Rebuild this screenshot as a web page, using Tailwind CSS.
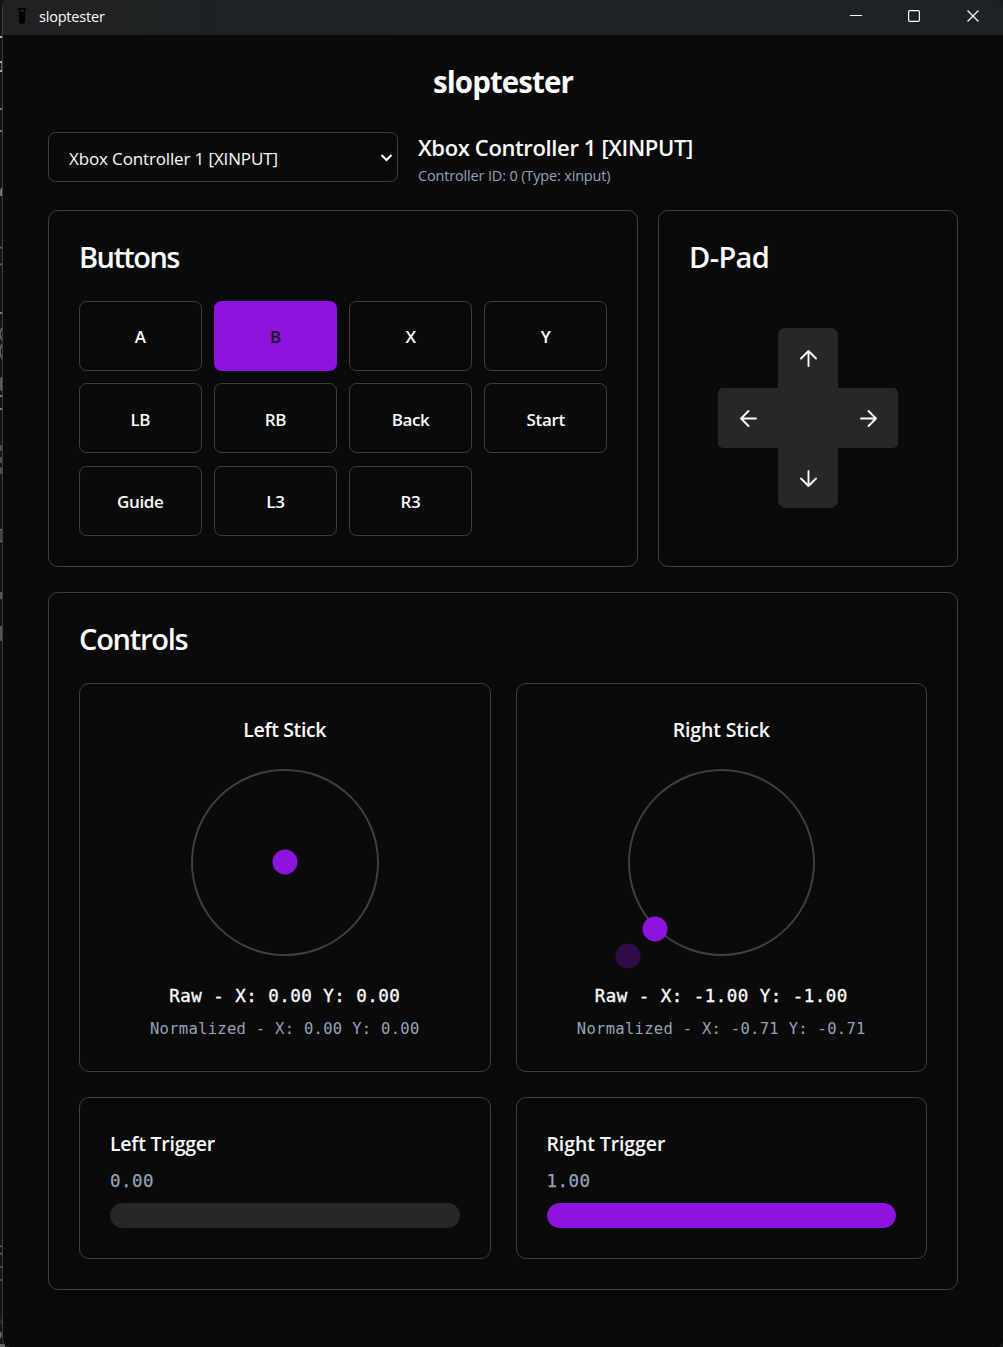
<!DOCTYPE html>
<html lang="en">
<head>
<meta charset="utf-8">
<title>sloptester</title>
<script src="https://cdn.jsdelivr.net/npm/@tailwindcss/browser@4"></script>
</head>
<body class="relative h-[1347px] w-[1003px] overflow-hidden bg-[#1a1a1a] font-['Open_Sans','Noto_Sans',sans-serif] text-[#fafafa]">
<!-- sliver of the window behind -->
<svg class="absolute left-0 top-0" width="12" height="1347" fill="#777">
  <rect width="3" height="1347" fill="#141414"/>
  <rect y="36" width="3" height="2" fill="#aaa"/><rect y="61" width="3" height="2" fill="#aaa"/><rect y="70" width="3" height="2" fill="#aaa"/><rect x="1" y="63" width="1" height="7" fill="#39718f"/>
  <rect y="108" width="3" height="2"/><rect y="130" width="3" height="2"/>
  <path d="M3 187q-3 1-3 4.500t3 5z" fill="#667d91"/><rect y="194" width="3" height="2"/>
  <path d="M0 247l3 2M0 265l3-2" stroke="#668" stroke-width="1.500"/><rect y="312" width="3" height="2"/>
  <path d="M3 327q-6 7 0 14M3 343q-6 8 0 17" stroke="#666" stroke-width="1.500" fill="none"/>
  <rect y="378" width="1" height="12" fill="#315b7b"/><rect x="1" y="377" width="2" height="14" fill="#776957"/>
  <rect y="395" width="3" height="2"/><rect y="408" width="3" height="2"/>
  <path d="M0 445h3v6H0zM0 457h3v6H0zM0 467l3 1v6H0z" fill="#666" opacity=".7"/>
  <path d="M0 529.500h3M0 541.500h3M1 530v12" stroke="#777" fill="none"/>
  <path d="M0 592h3v7H0zM0 626h3v15H0z" fill="#555"/>
  <path d="M0 1246l3 1M0 1253l3 2v10M0 1267h3M0 1280h3" stroke="#666" stroke-width="1.500" fill="none"/>
  <path d="M0 1318l3 6v4zM0 1331q4 3 0 8zM0 1344h5v3H0z" fill="#666"/>
</svg>

<div class="relative ml-[2px] flex h-[1347px] w-[1001px] flex-col overflow-hidden rounded-lg border-l border-[#3c3c3c] bg-[#0a0a0a]">
  <header class="flex h-[35px] shrink-0 items-center bg-linear-to-r from-[#202122] to-[#1d2225] to-40%">
    <svg class="mb-[3px] ml-[14px]" width="10" height="18" viewBox="0 0 10 18"><path d="M1 1h8v1.800H8V14a3 3 0 0 1-6 0V2.800H1z" fill="#000"/><path d="M3.200 3h3.600v1.500H3.200z" fill="#2a2b2c"/><circle cx="5.700" cy="8" r=".6" fill="#222"/><circle cx="4.300" cy="11" r=".6" fill="#222"/></svg>
    <span class="ml-3 flex-1 pb-[2px] text-[14.500px] leading-[32px] tracking-[-0.200px]">sloptester</span>
    <svg class="mr-[23px] mb-[3px]" width="130" height="14" viewBox="0 0 130 14" fill="none" stroke="#fff"><path d="M0 6.500h12" /><rect x="58.600" y="1.600" width="10.800" height="10.800" rx="1.200" stroke-width="1.200"/><path d="M117.500 1.500l11 11M128.500 1.500l-11 11" stroke-width="1.200"/></svg>
  </header>

  <main class="flex flex-col px-[45px]">
    <h1 class="mt-[27px] h-[40px] text-center text-[29.500px] font-bold leading-[39px] tracking-[-0.900px]">sloptester</h1>

    <div class="mt-[30px] flex h-[50px] gap-5">
      <button class="flex w-[350px] items-center justify-between rounded-[7.500px] border border-[#3f3f46] pl-5 pr-1 text-[17px] tracking-[-0.140px]">
        <span class="pt-[3px]">Xbox Controller 1 [XINPUT]</span>
        <svg width="13" height="9" viewBox="0 0 13 9" fill="none" stroke="#fff" stroke-width="2"><path d="M1.500 2l5 5 5-5"/></svg>
      </button>
      <div class="flex flex-col">
        <h2 class="h-[31px] text-[22px] font-semibold leading-[31px] tracking-[-0.370px]">Xbox Controller 1 [XINPUT]</h2>
        <p class="text-[14.500px] leading-[26px] tracking-[-0.160px] text-[#94a3b8]">Controller ID: 0 (Type: xinput)</p>
      </div>
    </div>

    <div class="mt-7 flex h-[357px] gap-5">
      <section class="w-[590px] rounded-[10px] border border-[#3f3f46] px-[30px]">
        <h2 class="mt-[26px] h-[40px] text-[29px] font-semibold leading-[40px] tracking-[-1.550px]">Buttons</h2>
        <div class="mt-6 grid auto-rows-[70px] grid-cols-4 gap-x-[12.500px] gap-y-[12.400px] text-[17px] font-semibold leading-[26px] tracking-[-0.350px]">
          <div class="flex items-center justify-center rounded-[7.500px] border border-[#3f3f46] pt-px">A</div>
          <div class="flex items-center justify-center rounded-[7.500px] bg-[#8e13dc] pt-px text-[#18181b]">B</div>
          <div class="flex items-center justify-center rounded-[7.500px] border border-[#3f3f46] pt-px">X</div>
          <div class="flex items-center justify-center rounded-[7.500px] border border-[#3f3f46] pt-px">Y</div>
          <div class="flex items-center justify-center rounded-[7.500px] border border-[#3f3f46] pt-[3px]">LB</div>
          <div class="flex items-center justify-center rounded-[7.500px] border border-[#3f3f46] pt-[3px]">RB</div>
          <div class="flex items-center justify-center rounded-[7.500px] border border-[#3f3f46] pt-[3px]">Back</div>
          <div class="flex items-center justify-center rounded-[7.500px] border border-[#3f3f46] pt-[3px]">Start</div>
          <div class="flex items-center justify-center rounded-[7.500px] border border-[#3f3f46] pt-0.5">Guide</div>
          <div class="flex items-center justify-center rounded-[7.500px] border border-[#3f3f46] pt-0.5">L3</div>
          <div class="flex items-center justify-center rounded-[7.500px] border border-[#3f3f46] pt-0.5">R3</div>
        </div>
      </section>

      <section class="w-[300px] rounded-[10px] border border-[#3f3f46] px-[30px]">
        <h2 class="mt-[26px] h-[40px] text-[29px] font-semibold leading-[40px] tracking-[-0.600px]">D-Pad</h2>
        <svg class="ml-[29px] mt-[51px]" width="180" height="180" viewBox="0 0 180 180">
          <rect x="60" width="60" height="180" rx="7.500" fill="#27272a"/><rect y="60" width="180" height="60" rx="5" fill="#27272a"/>
          <g fill="none" stroke="#fafafa" stroke-width="1.900" stroke-linecap="round" stroke-linejoin="round">
            <path d="M90.500 38V23M83 30.500l7.500-7.500 7.500 7.500"/>
            <path d="M90.500 143v15M83 150.500l7.500 7.500 7.500-7.500"/>
            <path d="M38 90.500H23M30.500 83l-7.500 7.500 7.500 7.500"/>
            <path d="M143 90.500h15M150.500 83l7.500 7.500-7.500 7.500"/>
          </g>
        </svg>
      </section>
    </div>

    <section class="mt-[25px] h-[698px] rounded-[10px] border border-[#3f3f46] px-[30px]">
      <h2 class="mt-[26px] h-[40px] text-[29px] font-semibold leading-[40px] tracking-[-1.250px]">Controls</h2>
      <div class="mt-6 grid grid-cols-2 grid-rows-[389px_162px] gap-[25px]">
        <div class="flex flex-col items-center rounded-[10px] border border-[#3f3f46]">
          <h3 class="mt-[31px] text-[19.500px] font-semibold leading-[30px] tracking-[-0.350px]">Left Stick</h3>
          <div class="relative mt-6 h-[187px] w-[187.500px] shrink-0 rounded-full border-2 border-[#3f3f46]">
            <div class="absolute left-1/2 top-[49.700%] size-[25px] -translate-1/2 rounded-full bg-[#8e13dc]"></div>
          </div>
          <p class="mt-[24px] font-['DejaVu_Sans_Mono',monospace] text-[17.500px] leading-[32px] tracking-[0.465px] whitespace-pre [-webkit-text-stroke:0.350px]">Raw - X: 0.00 Y: 0.00</p>
          <p class="font-['DejaVu_Sans_Mono',monospace] text-[15.500px] leading-[35px] tracking-[0.294px] whitespace-pre text-[#94a3b8]">Normalized - X: 0.00 Y: 0.00</p>
        </div>
        <div class="flex flex-col items-center rounded-[10px] border border-[#3f3f46]">
          <h3 class="mt-[31px] text-[19.500px] font-semibold leading-[30px] tracking-[-0.150px]">Right Stick</h3>
          <div class="relative mt-6 size-[187px] shrink-0 rounded-full border-2 border-[#3f3f46]">
            <div class="absolute left-[-2px] top-[184.500px] size-[25px] -translate-1/2 rounded-full bg-[#8e13dc]/30"></div>
            <div class="absolute left-[25px] top-[157.500px] size-[25px] -translate-1/2 rounded-full bg-[#8e13dc]"></div>
          </div>
          <p class="mt-[24px] font-['DejaVu_Sans_Mono',monospace] text-[17.500px] leading-[32px] tracking-[0.465px] whitespace-pre [-webkit-text-stroke:0.350px]">Raw - X: -1.00 Y: -1.00</p>
          <p class="font-['DejaVu_Sans_Mono',monospace] text-[15.500px] leading-[35px] tracking-[0.294px] whitespace-pre text-[#94a3b8]">Normalized - X: -0.71 Y: -0.71</p>
        </div>
        <div class="flex flex-col rounded-[10px] border border-[#3f3f46] px-[30px]">
          <h3 class="mt-[31px] text-[19.500px] font-semibold leading-[30px] tracking-[-0.230px]">Left Trigger</h3>
          <p class="mt-[6px] font-['DejaVu_Sans_Mono',monospace] text-[17.500px] leading-[32px] tracking-[0.465px] text-[#94a3b8] [-webkit-text-stroke:0.250px]">0.00</p>
          <div class="mt-[6px] h-[25px] rounded-full bg-[#27272a]"></div>
        </div>
        <div class="flex flex-col rounded-[10px] border border-[#3f3f46] px-[30px]">
          <h3 class="mt-[31px] text-[19.500px] font-semibold leading-[30px] tracking-[-0.100px]">Right Trigger</h3>
          <p class="mt-[6px] font-['DejaVu_Sans_Mono',monospace] text-[17.500px] leading-[32px] tracking-[0.465px] text-[#94a3b8] [-webkit-text-stroke:0.250px]">1.00</p>
          <div class="mt-[6px] h-[25px] overflow-hidden rounded-full bg-[#27272a]"><div class="h-full rounded-full bg-[#8e13dc]" style="width:100%"></div></div>
        </div>
      </div>
    </section>
  </main>
</div>
</body>
</html>
